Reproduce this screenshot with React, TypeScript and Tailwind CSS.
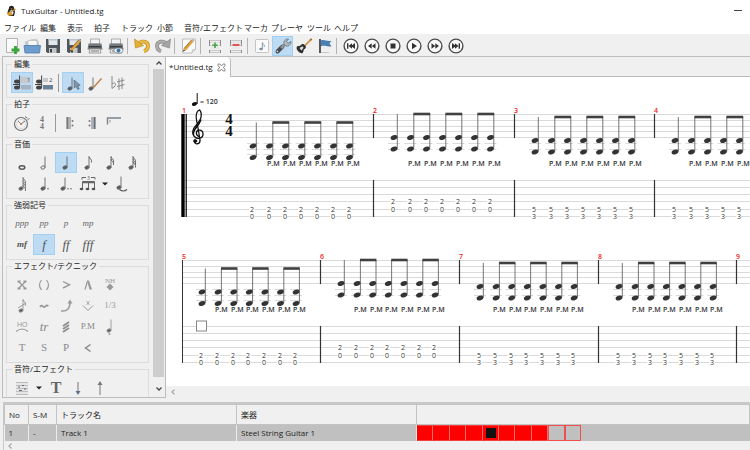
import type { ReactNode } from 'react';

/* ---------- shared bits ---------- */

function Icon({ children }: { children: ReactNode }) {
  return (
    <svg width="20" height="20" viewBox="0 0 20 20" fill="none" className="shrink-0">
      {children}
    </svg>
  );
}

type ButtonProps = { label: string; active?: boolean; children: ReactNode };

function ToolbarButton({ label, active, children }: ButtonProps) {
  return (
    <button
      type="button"
      aria-label={label}
      className={`flex h-5 w-[21px] items-center justify-center ${active ? 'bg-[#bddcf4] outline outline-1 -outline-offset-1 outline-[#a3cff0]' : ''}`}
    >
      {children}
    </button>
  );
}

function PaletteButton({ label, active, children }: ButtonProps) {
  return (
    <button
      type="button"
      aria-label={label}
      className={`flex h-[21px] w-[22px] items-center justify-center ${active ? 'bg-[#bddcf4] outline outline-1 -outline-offset-1 outline-[#a3cff0]' : ''}`}
    >
      {children}
    </button>
  );
}

function Separator() {
  return <div className="mr-[3px] ml-px h-4 w-px bg-[#b4b4b4]" />;
}

function Caret() {
  return (
    <button type="button" aria-label="選択" className="flex h-[21px] w-3 items-center justify-center">
      <svg width="6" height="4" viewBox="0 0 6 4"><path d="M0 .5h6L3 3.6z" fill="#222" /></svg>
    </button>
  );
}

function Chevron({ dir, color = '#444' }: { dir: 'up' | 'down' | 'left'; color?: string }) {
  const paths = { up: 'M1.5 5.5 4 3l2.5 2.5', down: 'M1.5 2.5 4 5l2.5-2.5', left: 'M5.5 1.5 3 4l2.5 2.5' };
  return (
    <svg width="8" height="8" viewBox="0 0 8 8" fill="none">
      <path d={paths[dir]} stroke={color} strokeWidth="1.3" />
    </svg>
  );
}

/* ---------- toolbar icons ---------- */

function Disk() {
  return (
    <>
      <path d="M3 3h14v14H4.500L3 15.500z" fill="#50565d" />
      <path d="M5.500 3h9v6h-9z" fill="#e4e7e9" />
      <path d="M5.500 3h9v1.500h-9z" fill="#b9c4cc" />
      <path d="M6 12h7.500v5H6z" fill="#c3c6c9" />
      <path d="M7 13h2v3.500H7z" fill="#444" />
    </>
  );
}

function Pencil() {
  return (
    <>
      <path d="M7 12.500 14.500 4l2 1.700-7.500 8.500-3 1.300z" fill="#e0a23c" />
      <path d="M7 12.500 14.500 4" stroke="#845b20" strokeWidth=".8" />
      <path d="m14.500 4 1.200-1.300 2 1.700-1.200 1.300z" fill="#b8b0a5" />
      <path d="m6 15.500.6-1.800 1.400 1.100z" fill="#222" />
    </>
  );
}

function Printer() {
  return (
    <>
      <path d="M5.500 3h9v5h-9z" fill="#f4f4f4" stroke="#999" strokeWidth=".8" />
      <path d="M3.500 7.500h13l1 6h-15z" fill="#777a7c" />
      <path d="M4 10h12v1.500H4z" fill="#393c3e" />
      <path d="M5 13h10l1 4H4z" fill="#eee" stroke="#8a8a8a" strokeWidth=".8" />
      <path d="M6 15h8" stroke="#666" strokeWidth=".9" />
    </>
  );
}

function Table({ mark }: { mark: 'plus' | 'minus' }) {
  return (
    <>
      <path d="M4 4.500h12M4 6.500h12M4 9.500h12M4 14.500h12M4 16.500h12" stroke="#c6c6c6" />
      <path d="M4.500 4v6M15.500 4v6M4.500 14v3M15.500 14v3" stroke="#8f8f8f" />
      <path d="M6 5h8v8H6z" fill="#e8e8e8" fillOpacity=".9" />
      {mark === 'plus' ? (
        <path d="M10 6.500v5.500M7.300 9.300h5.400" stroke="#4c9f4c" strokeWidth="1.600" />
      ) : (
        <path d="M6.500 9h7" stroke="#dc2f2f" strokeWidth="1.600" />
      )}
    </>
  );
}

function Transport({ children }: { children: ReactNode }) {
  return (
    <Icon>
      <circle cx="10" cy="10" r="6.900" fill="#fbfbfb" stroke="#4b4b4b" strokeWidth="1.400" />
      <g fill="#333">{children}</g>
    </Icon>
  );
}

function Toolbar() {
  return (
    <div className="flex h-[22px] items-center pt-px">
      <ToolbarButton label="新規">
        <Icon>
          <path d="M5.500 2.500h11v14h-11z" fill="#fafafa" stroke="#b3b3b3" />
          <path d="M14.500 10v8M10.500 14h8" stroke="#3aa53a" strokeWidth="2.800" />
        </Icon>
      </ToolbarButton>
      <ToolbarButton label="開く">
        <Icon>
          <path d="M3 5h5l1-2h6l2 3v6H3z" fill="#c9cdd0" />
          <path d="M6 4.500h9v6H6z" fill="#f7f7f7" stroke="#b8bcc0" strokeWidth=".7" />
          <path d="M2 9.500h16.500l-1 7.500H3z" fill="#6d9dcc" stroke="#4a7aab" strokeWidth=".8" />
        </Icon>
      </ToolbarButton>
      <ToolbarButton label="保存"><Icon><Disk /></Icon></ToolbarButton>
      <ToolbarButton label="名前を付けて保存"><Icon><Disk /><Pencil /></Icon></ToolbarButton>
      <ToolbarButton label="印刷"><Icon><Printer /></Icon></ToolbarButton>
      <ToolbarButton label="印刷プレビュー">
        <Icon>
          <Printer />
          <ellipse cx="12.500" cy="14.500" rx="4.500" ry="2.600" fill="#f5f8fa" stroke="#6c7d8a" strokeWidth=".8" />
          <circle cx="12.500" cy="14.500" r="2" fill="#3f78ad" />
        </Icon>
      </ToolbarButton>
      <Separator />
      <ToolbarButton label="元に戻す">
        <Icon>
          <path d="M5.500 8.500C9 4 16 4.800 16 10c0 3-2 4.600-4 5.200" stroke="#c08d1d" strokeWidth="3.800" />
          <path d="M5.500 8.500C9 4 16 4.800 16 10c0 3-2 4.600-4 5.200" stroke="#e9bd45" strokeWidth="2.400" />
          <path d="m2.500 3 1 9 8-2.500z" fill="#e2b033" stroke="#c08d1d" strokeWidth=".7" />
        </Icon>
      </ToolbarButton>
      <ToolbarButton label="やり直し">
        <Icon>
          <path d="M14.500 8.500C11 4 4 4.800 4 10c0 3 2 4.600 4 5.200" stroke="#8a8a8a" strokeWidth="3.800" />
          <path d="M14.500 8.500C11 4 4 4.800 4 10c0 3 2 4.600 4 5.200" stroke="#acacac" strokeWidth="2.400" />
          <path d="m17.500 3-1 9-8-2.500z" fill="#a5a5a5" stroke="#8a8a8a" strokeWidth=".7" />
        </Icon>
      </ToolbarButton>
      <Separator />
      <ToolbarButton label="曲情報">
        <Icon>
          <path d="M3.500 3h13v10.500l-3.500 3.500H3.500z" fill="#fafafa" stroke="#bdbdbd" />
          <path d="m13 17 .3-3.300 3.200-.2" fill="#ddd" stroke="#bdbdbd" strokeWidth=".7" />
          <g transform="translate(-2 0)"><Pencil /></g>
        </Icon>
      </ToolbarButton>
      <Separator />
      <ToolbarButton label="トラック追加"><Icon><Table mark="plus" /></Icon></ToolbarButton>
      <ToolbarButton label="トラック削除"><Icon><Table mark="minus" /></Icon></ToolbarButton>
      <Separator />
      <ToolbarButton label="鍵盤">
        <Icon>
          <rect x="3.500" y="3.500" width="13" height="13" rx="1" fill="#fafafa" stroke="#c4c4c4" />
          <ellipse cx="9" cy="13" rx="1.800" ry="1.300" fill="#7893ab" />
          <path d="M10.400 13V6.500c.4 1.800 2.600 2 1.800 4.500" stroke="#7893ab" strokeWidth=".9" />
        </Icon>
      </ToolbarButton>
      <ToolbarButton label="編集ツール" active>
        <Icon>
          <path d="m4.500 15.500 5-5" stroke="#444b52" strokeWidth="4" strokeLinecap="round" />
          <path d="m8 12 5.500-5" stroke="#8e969c" strokeWidth="2.800" />
          <path d="M11 8.500c-1-3 1.500-6 4.500-5.500l-2 2.500 1.500 1.800L18 5.500c.3 3-2.500 5.300-5.300 4.300z" fill="#b5babd" stroke="#666d73" strokeWidth=".8" />
          <circle cx="4.400" cy="15.300" r=".9" fill="#cfe0ec" />
        </Icon>
      </ToolbarButton>
      <ToolbarButton label="楽器">
        <Icon>
          <path d="m10 10.500 7-7" stroke="#d19a58" strokeWidth="1.800" />
          <path d="m15.700 3.300 1.600-1 1 1-1.400 1.700z" fill="#a8692b" />
          <path d="M3 10.500c1.500-1 2.300 0 3.300-1 1-1.300 2.200-2 3.500-1.300l1.900 2c.6 1.400-.2 2.300-1.500 3-1.300.9 0 2-1.600 3.800C6.500 18.500 1 13.500 3 10.500z" fill="#303030" />
          <path d="m5.500 12 2.800-1.700 1.300 1.400-2.200 2.800z" fill="#dedede" />
        </Icon>
      </ToolbarButton>
      <ToolbarButton label="マーカ">
        <Icon>
          <path d="M5 3v14" stroke="#333" strokeWidth="1.600" />
          <path d="M5.800 4.500c4-1.500 5 1.200 10.700.3l-2 2.700 2 2.700c-5 1-6.700-1.400-10.700.2z" fill="#4a7fb2" />
          <path d="M6 16.500h8" stroke="#c9c9c9" />
        </Icon>
      </ToolbarButton>
      <Separator />
      <ToolbarButton label="先頭へ"><Transport><path d="M6 7.300h1.400v5.400H6zM11 7.300v5.400L7.500 10zM14 7v6l-4-3z" /></Transport></ToolbarButton>
      <ToolbarButton label="前へ"><Transport><path d="M9.700 7.300v5.400L6 10zM13.500 7.300v5.400L9.800 10z" /></Transport></ToolbarButton>
      <ToolbarButton label="停止"><Transport><path d="M7.500 7.500h5v5h-5z" /></Transport></ToolbarButton>
      <ToolbarButton label="再生"><Transport><path d="M8 6.800v6.400l5-3.200z" /></Transport></ToolbarButton>
      <ToolbarButton label="次へ"><Transport><path d="M10.300 7.300v5.400L14 10zM6.500 7.300v5.400l3.700-2.700z" /></Transport></ToolbarButton>
      <ToolbarButton label="末尾へ"><Transport><path d="M12.600 7.300H14v5.400h-1.400zM9 7.300v5.400l3.500-2.700zM6 7v6l4-3z" /></Transport></ToolbarButton>
    </div>
  );
}

/* ---------- palette ---------- */

type NoteProps = { flags?: number; dots?: number; hollow?: boolean; color?: string };

function NoteGlyph({ flags = 0, dots = 0, hollow, color = '#666' }: NoteProps) {
  return (
    <>
      <ellipse
        cx="9"
        cy="14.500"
        rx="2.200"
        ry="1.500"
        transform="rotate(-20 9 14.500)"
        fill={hollow ? 'none' : '#525c68'}
        stroke={color}
        strokeWidth=".9"
      />
      <path d="M11 14.300V3.500" stroke={color} strokeWidth=".9" />
      {Array.from({ length: flags }, (_, i) => (
        <path key={i} d={`M11 ${3.5 + i * 2.5}c.3 2.500 3.500 2.500 2.400 6`} stroke={color} strokeWidth="1" />
      ))}
      {Array.from({ length: dots }, (_, i) => (
        <circle key={i} cx={14 + i * 3} cy="14.800" r=".8" fill={color} />
      ))}
    </>
  );
}

function ChordGlyph({ digit, light }: { digit: string; light?: boolean }) {
  return (
    <Icon>
      <path d={light ? 'M9 5h5v4H9z' : 'M9 4h9v6H9z'} fill="#c6c9cc" />
      <path d="M9 12h10v4.500H9z" fill={light ? '#6d8196' : '#a4b3c1'} />
      <ellipse cx="5" cy="8.500" rx="3" ry="2" fill="#444" />
      <ellipse cx="5" cy="14.500" rx="3" ry="2" fill="#444" />
      <path d="M7.600 14.500V2.500M1 11.500h7" stroke="#444" />
      <text x="15" y="9" fontSize="6" fill="#557" className="font-sans">{digit}</text>
    </Icon>
  );
}

function Group({ title, children }: { title: string; children: ReactNode }) {
  return (
    <fieldset className="min-w-0 border border-[#dcdcdc] px-1 pb-1">
      <legend className="ml-px px-0.5 text-[8px] leading-[12px] text-[#222]">{title}</legend>
      <div className="pt-0.5">{children}</div>
    </fieldset>
  );
}

function Row({ children }: { children: ReactNode }) {
  return <div className="flex h-[21px] items-center">{children}</div>;
}

function SerifGlyph({ text, className }: { text: string; className: string }) {
  return <span className={`font-['Liberation_Serif',serif] leading-none ${className}`}>{text}</span>;
}

const soft = ['ppp', 'pp', 'p', 'mp'];
const loud = ['mf', 'f', 'ff', 'fff'];

function Palette() {
  return (
    <aside className="flex w-[164px] shrink-0 border border-[#bcbcbc] pl-[3px]">
      <div className="min-w-0 flex-1 overflow-hidden pt-px pr-1">
        <Group title="編集">
          <Row>
            <PaletteButton label="声部1" active><ChordGlyph digit="1" /></PaletteButton>
            <PaletteButton label="声部2"><ChordGlyph digit="2" light /></PaletteButton>
            <div className="mx-[3px] h-[18px] w-px bg-[#999]" />
            <PaletteButton label="選択モード" active>
              <Icon>
                <g transform="translate(-2 1)"><NoteGlyph /></g>
                <path d="m11 7 .3 8 1.900-1.700 1.500 3.200 1.500-.8-1.500-3 2.500-.4z" fill="#8497aa" stroke="#556778" strokeWidth=".7" />
              </Icon>
            </PaletteButton>
            <PaletteButton label="編集モード">
              <Icon>
                <g transform="translate(-3 1)"><NoteGlyph /></g>
                <path d="m8 15 8.500-9.500" stroke="#bd8448" strokeWidth="1.500" />
              </Icon>
            </PaletteButton>
            <PaletteButton label="臨時記号">
              <Icon>
                <path d="M5 3v12.500c4-2 4.500-5.500 2-5.500q-1.200 0-2 1.200" stroke="#888" />
                <path d="M12 5.500V17M15 4.500V16M10 9l7.500-2M10 13.500l7.500-2" stroke="#888" />
              </Icon>
            </PaletteButton>
          </Row>
        </Group>

        <Group title="拍子">
          <Row>
            <PaletteButton label="テンポ">
              <Icon>
                <circle cx="9" cy="11" r="6.500" fill="#f3f3f3" stroke="#777" strokeWidth="1.200" />
                <circle cx="9" cy="11" r="4.500" stroke="#aaa" strokeDasharray="1 1.500" strokeWidth=".8" />
                <path d="M9 11 6 8M9 11l4-3M13 3.500l2.500 1.800M15.500 7l2-1.500" stroke="#777" />
                <circle cx="9" cy="11" r="1" fill="#b87a35" />
              </Icon>
            </PaletteButton>
            <PaletteButton label="拍子記号">
              <span className="mr-1 flex flex-col font-['Liberation_Serif',serif] text-[8px] leading-[7px] font-bold text-[#777]">
                <span>4</span>
                <span>4</span>
              </span>
            </PaletteButton>
            <div className="mr-[3px] h-[18px] w-px bg-[#999]" />
            <PaletteButton label="反復開始">
              <Icon>
                <path d="M7.500 4v12" stroke="#777" strokeWidth="2.200" />
                <path d="M10 4v12" stroke="#777" />
                <circle cx="12.500" cy="8" r="1" fill="#777" /><circle cx="12.500" cy="12.500" r="1" fill="#777" />
              </Icon>
            </PaletteButton>
            <PaletteButton label="反復終了">
              <Icon>
                <path d="M12.500 4v12" stroke="#69727c" strokeWidth="2.200" />
                <path d="M10 4v12" stroke="#777" />
                <circle cx="7.500" cy="8" r="1" fill="#777" /><circle cx="7.500" cy="12.500" r="1" fill="#777" />
              </Icon>
            </PaletteButton>
            <PaletteButton label="反復括弧">
              <Icon>
                <path d="M3.500 11.500V5H17" stroke="#7a828b" strokeWidth="1.400" />
                <path d="M6 9.500V7" stroke="#999" />
              </Icon>
            </PaletteButton>
          </Row>
        </Group>

        <Group title="音価">
          <Row>
            <PaletteButton label="全音符">
              <Icon><ellipse cx="10" cy="14.500" rx="2.800" ry="1.700" fill="#f0f0f0" stroke="#555" strokeWidth="1.500" /></Icon>
            </PaletteButton>
            <PaletteButton label="2分音符"><Icon><NoteGlyph hollow /></Icon></PaletteButton>
            <PaletteButton label="4分音符" active><Icon><NoteGlyph /></Icon></PaletteButton>
            <PaletteButton label="8分音符"><Icon><NoteGlyph flags={1} /></Icon></PaletteButton>
            <PaletteButton label="16分音符"><Icon><NoteGlyph flags={2} /></Icon></PaletteButton>
            <PaletteButton label="32分音符"><Icon><NoteGlyph flags={3} /></Icon></PaletteButton>
          </Row>
          <Row>
            <PaletteButton label="64分音符"><Icon><NoteGlyph flags={4} color="#777" /></Icon></PaletteButton>
            <PaletteButton label="付点"><Icon><NoteGlyph dots={1} /></Icon></PaletteButton>
            <PaletteButton label="複付点"><Icon><g transform="translate(-2)"><NoteGlyph dots={2} /></g></Icon></PaletteButton>
            <PaletteButton label="連符">
              <Icon>
                <path d="M4.500 15V7.500h12V15M10.500 15V7.500M4 5.500V3.500h4M17 5.500V3.500h-4" stroke="#666" />
                <path d="M4.500 8.500h12" stroke="#666" strokeWidth="1.500" />
                <ellipse cx="3.500" cy="15" rx="1.900" ry="1.300" fill="#555" />
                <ellipse cx="9.500" cy="15" rx="1.900" ry="1.300" fill="#555" />
                <ellipse cx="15.500" cy="15" rx="1.900" ry="1.300" fill="#555" />
                <text x="9" y="6" fontSize="5" fill="#555">3</text>
              </Icon>
            </PaletteButton>
            <Caret />
            <PaletteButton label="タイ">
              <Icon>
                <g transform="translate(-2 -1)"><NoteGlyph /></g>
                <path d="M7.500 15.500q4 3 7.500 0" stroke="#555" strokeWidth="1.200" />
              </Icon>
            </PaletteButton>
          </Row>
        </Group>

        <Group title="強弱記号">
          <Row>
            {soft.map((d) => (
              <PaletteButton key={d} label={d}>
                <SerifGlyph text={d} className="text-[9px] italic text-[#666]" />
              </PaletteButton>
            ))}
          </Row>
          <Row>
            {loud.map((d) => (
              <PaletteButton key={d} label={d} active={d === 'f'}>
                <SerifGlyph
                  text={d}
                  className={`italic text-[#555] ${d === 'mf' ? 'text-[9px] font-bold' : 'text-[13px]'}`}
                />
              </PaletteButton>
            ))}
          </Row>
        </Group>

        <Group title="エフェクト/テクニック">
          <Row>
            <PaletteButton label="デッドノート">
              <Icon>
                <path d="m7 7 6 6M13 7l-6 6" stroke="#999" strokeWidth="1.300" />
                <path d="M5.500 5.500h3v2h-3zM11.500 5.500h3v2h-3zM5.500 12.500h3v2h-3zM11.500 12.500h3v2h-3z" fill="#999" />
              </Icon>
            </PaletteButton>
            <PaletteButton label="ゴーストノート">
              <Icon><path d="M7.500 5q-4 5 0 10M12.500 5q4 5 0 10" stroke="#999" strokeWidth="1.200" /></Icon>
            </PaletteButton>
            <PaletteButton label="アクセント">
              <Icon><path d="m7 6.500 6.500 3.300L7 13" stroke="#999" strokeWidth="1.400" /></Icon>
            </PaletteButton>
            <PaletteButton label="ヘビーアクセント">
              <Icon><path d="m9.500 6-2.500 8.500" stroke="#999" strokeWidth="1.200" /><path d="m9 5.500 2.500 9H14l-3-9z" fill="#999" /></Icon>
            </PaletteButton>
            <PaletteButton label="ハーモニクス">
              <Icon>
                <text x="5" y="8" fontSize="7" fill="#999" fontFamily="Liberation Serif, serif">NH</text>
                <path d="m10 8.500 3.500 3.500-3.500 3.500L6.500 12z" fill="#999" />
              </Icon>
            </PaletteButton>
          </Row>
          <Row>
            <PaletteButton label="装飾音">
              <Icon><NoteGlyph flags={1} color="#999" /><path d="m6 12 8-5" stroke="#999" /></Icon>
            </PaletteButton>
            <PaletteButton label="ビブラート">
              <Icon><path d="M6 11q1.500-2.500 2.800-.7t2.700 0 2.800 0" stroke="#999" strokeWidth="1.700" /></Icon>
            </PaletteButton>
            <PaletteButton label="ベンド">
              <Icon><path d="M5 15c6 .5 9-2 9-9.500" stroke="#999" strokeWidth="1.600" /><path d="m11.500 7.500 2.500-4 2.500 4z" fill="#999" /></Icon>
            </PaletteButton>
            <PaletteButton label="トレモロバー">
              <Icon><path d="m5 9.500 5 5 5-5" stroke="#999" /><path d="m8.500 5 3 4M11.500 5l-3 4" stroke="#999" strokeWidth=".8" /></Icon>
            </PaletteButton>
            <PaletteButton label="スライド">
              <SerifGlyph text="1/3" className="text-[9px] text-[#999]" />
            </PaletteButton>
          </Row>
          <Row>
            <PaletteButton label="ハンマリング">
              <Icon>
                <text x="5" y="10" fontSize="7" fill="#999" fontFamily="Liberation Sans, sans-serif">HO</text>
                <path d="M4 14.500q6-5 12 0" stroke="#999" strokeWidth="1.100" />
              </Icon>
            </PaletteButton>
            <PaletteButton label="トリル">
              <SerifGlyph text="tr" className="text-[13px] italic text-[#888]" />
            </PaletteButton>
            <PaletteButton label="トレモロピッキング">
              <Icon><path d="m7 9 6-4M7 12l6-4M7 15l6-4" stroke="#909090" strokeWidth="1.900" /></Icon>
            </PaletteButton>
            <PaletteButton label="パームミュート">
              <SerifGlyph text="P.M" className="text-[9px] text-[#888]" />
            </PaletteButton>
            <PaletteButton label="スタッカート">
              <Icon><g transform="translate(0 -1)"><NoteGlyph color="#999" /></g><circle cx="9.500" cy="17" r=".9" fill="#999" /></Icon>
            </PaletteButton>
          </Row>
          <Row>
            {['T', 'S', 'P'].map((t) => (
              <PaletteButton key={t} label={t}>
                <SerifGlyph text={t} className="text-[11px] text-[#8a8a8a]" />
              </PaletteButton>
            ))}
            <PaletteButton label="フェードイン">
              <Icon><path d="M12.500 6.500 7.500 10l5 3.500" stroke="#888" strokeWidth="1.500" /></Icon>
            </PaletteButton>
          </Row>
        </Group>

        <Group title="音符/エフェクト">
          <Row>
            <PaletteButton label="コード">
              <Icon>
                <path d="M4 4h12v13H4z" fill="#e6e6e6" />
                <path d="M4 4.500h12M4 7.500h12M4 10.500h12M4 13.500h12M4 16.500h12" stroke="#bbb" />
                <path d="M6 9h2M10 7.500h2M7 12.500h3M12 11h2" stroke="#667" strokeWidth="1.200" />
              </Icon>
            </PaletteButton>
            <Caret />
            <PaletteButton label="テキスト">
              <SerifGlyph text="T" className="text-[16px] font-bold text-[#666]" />
            </PaletteButton>
            <PaletteButton label="下ストローク">
              <Icon><path d="M10 4v11" stroke="#777" /><path d="m7.500 13 2.500 4 2.500-4z" fill="#617287" /></Icon>
            </PaletteButton>
            <PaletteButton label="上ストローク">
              <Icon><path d="M10 5v12" stroke="#777" /><path d="m7.500 7 2.500-4 2.500 4z" fill="#777" /></Icon>
            </PaletteButton>
          </Row>
        </Group>
      </div>
      <div className="flex w-3 shrink-0 flex-col bg-[#f0f0f0] pr-px">
        <button type="button" aria-label="上へ" className="flex h-3 items-center justify-center"><Chevron dir="up" /></button>
        <div className="flex-1 bg-[#cdcdcd]" />
        <button type="button" aria-label="下へ" className="flex h-5 items-center justify-center pt-1"><Chevron dir="down" /></button>
      </div>
    </aside>
  );
}

/* ---------- score ---------- */

type Measure = {
  number: number;
  bar: number; // x of the left bar line
  first: number; // x of the first chord
  rise: number; // beam position below the top staff line
  line: number; // tab line of the upper fret
  frets: [string, string];
};

const systems: { y: number; step: number; measures: Measure[] }[] = [
  {
    y: 37,
    step: 16,
    measures: [
      { number: 1, bar: 16, first: 87, rise: 8.5, line: 4, frets: ['2', '0'] },
      { number: 2, bar: 207, first: 228, rise: 0, line: 3, frets: ['2', '0'] },
      { number: 3, bar: 348, first: 369, rise: 3, line: 4, frets: ['5', '3'] },
      { number: 4, bar: 488, first: 509, rise: 3, line: 4, frets: ['5', '3'] },
    ],
  },
  {
    y: 183,
    step: 15.6,
    measures: [
      { number: 5, bar: 16, first: 36, rise: 8.5, line: 4, frets: ['2', '0'] },
      { number: 6, bar: 154, first: 175, rise: 0, line: 3, frets: ['2', '0'] },
      { number: 7, bar: 293, first: 314, rise: 3, line: 4, frets: ['5', '3'] },
      { number: 8, bar: 432, first: 453, rise: 3, line: 4, frets: ['5', '3'] },
      { number: 9, bar: 570, first: 591, rise: 3, line: 4, frets: ['5', '3'] },
    ],
  },
];

const staffLines = [0, 6, 12, 17, 23];
const tabLines = [66, 73, 80, 87, 95, 102];

function MeasureView({ m, step }: { m: Measure; step: number }) {
  const xs = Array.from({ length: 7 }, (_, i) => m.first + (i ? 0.5 : 0) + i * step);
  const ledgers = m.rise > 5 ? [29, 35, 40] : [29, 35];

  return (
    <g>
      <text x={m.bar} y={-1} fontSize="7" fontWeight="600" fill="#f02020">{m.number}</text>
      {m.number !== 1 && m.number !== 5 && (
        <path d={`M${m.bar + 0.5} 0v24M${m.bar + 0.5} 66v37`} stroke="#333" strokeWidth="1.200" />
      )}
      {xs.map((x, i) => (
        <g key={i}>
          {ledgers.map((y) => (
            <path key={y} d={`M${x - 6} ${y + 0.5}h12`} stroke="#dadada" />
          ))}
          <path d={`M${x + 3.3} ${m.rise}V${m.rise + 34.5}`} stroke="#666" strokeWidth=".9" />
          {[23.5, 35].map((dy) => (
            <ellipse
              key={dy}
              cx={x}
              cy={m.rise + dy}
              rx="3.500"
              ry="2.300"
              transform={`rotate(-20 ${x} ${m.rise + dy})`}
              fill="#333"
            />
          ))}
          {i > 0 && (
            <text x={Math.round(x - 3)} y={52} fontSize="7" fill="#333" fontWeight="600">P.M</text>
          )}
          {m.frets.map((fret, k) => (
            <g key={k}>
              <rect x={x - 3.5} y={tabLines[m.line + k] - 2} width="5" height="5" fill="#fff" />
              <text x={Math.round(x - 1)} y={tabLines[m.line + k] + 3} fontSize="7" fill="#333" textAnchor="middle">
                {fret}
              </text>
            </g>
          ))}
        </g>
      ))}
      {[1, 3, 5].map((i) => (
        <path key={i} d={`M${xs[i] + 2.9} ${m.rise}H${xs[i + 1] + 3.7}`} stroke="#404040" strokeWidth="2.600" />
      ))}
    </g>
  );
}

function Score() {
  return (
    <svg className="h-full w-full font-['Open_Sans','Noto_Sans',sans-serif]" fill="none">
      {systems.map((s) => (
        <g key={s.y} transform={`translate(0 ${s.y})`}>
          {[...staffLines, ...tabLines].map((y) => (
            <line key={y} x1="16" x2="100%" y1={y + 0.5} y2={y + 0.5} stroke="#dadada" />
          ))}
          {s.measures.map((m) => (
            <MeasureView key={m.number} m={m} step={s.step} />
          ))}
        </g>
      ))}

      {/* opening bar, clef, time signature and tempo */}
      <path d="M15.300 37h3.400v103h-3.400zM19.600 37h1.200v103h-1.200z" fill="#000" />
      <g stroke="#111" strokeLinecap="round">
        <path d="M33 59.500C29.500 58.500 29.500 53.500 33 53.200 38 53 38.500 60 33.500 61.300 28 62 25.500 56.500 27.500 52 29.500 48 34.800 44.500 35.200 39 35.400 35.500 34.300 33 33.200 33 30.500 34.500 29.800 39 30.500 43L34 62.500C34.500 67.500 30 67.800 28.500 65.500" strokeWidth="1.300" />
        <path d="M27.400 57c-.4-5 5-7 7.300-14" strokeWidth="1.700" />
        <circle cx="29.200" cy="64" r="1.500" fill="#111" />
      </g>
      <g fill="#111" fontSize="15" fontWeight="700" textAnchor="middle" fontFamily="Liberation Serif, serif">
        <text x="63" y="47">4</text>
        <text x="63" y="59">4</text>
      </g>
      <ellipse cx="28.500" cy="27" rx="2.700" ry="1.800" transform="rotate(-20 28.500 27)" fill="#111" />
      <path d="M31.200 27V16" stroke="#111" />
      <text x="34" y="27" fontSize="7" fontWeight="600" fill="#333">= 120</text>

      <path d="M16.500 183v103" stroke="#333" />
      {/* caret on the first string */}
      <rect x="30.500" y="244" width="10" height="10" fill="#fff" stroke="#888" />
    </svg>
  );
}

/* ---------- track table ---------- */

const filled = [true, true, true, true, true, true, true, true, false, false];
const headCell = 'h-5 border border-[#c3c3c3] bg-[#f0f0f0] px-1 text-left font-normal';

function Tracks() {
  return (
    <section className="mt-1 ml-[3px] border-t-2 border-l border-[#c8c8c8]">
      <table className="w-full table-fixed border-collapse text-[8px] text-[#222]">
        <colgroup>
          <col className="w-6" />
          <col className="w-7" />
          <col className="w-45" />
          <col className="w-45" />
          <col />
        </colgroup>
        <thead>
          <tr>
            <th className={headCell}>No</th>
            <th className={headCell}>S-M</th>
            <th className={headCell}>トラック名</th>
            <th className={headCell}>楽器</th>
            <th className={headCell} aria-label="小節" />
          </tr>
        </thead>
        <tbody>
          <tr className="h-4 bg-[#c0c0c0]">
            <td className="border-r border-[#ececec] px-1">1</td>
            <td className="border-r border-[#ececec] px-1">-</td>
            <td className="border-r border-[#ececec] px-1">Track 1</td>
            <td className="border-r border-[#ececec] px-1">Steel String Guitar 1</td>
            <td className="p-0">
              <div className="grid h-4 w-41 grid-cols-10">
                {filled.map((on, i) => (
                  <div
                    key={i}
                    className={`flex items-center justify-center border ${on ? 'border-y-[#f04040] border-r-[#f07070] border-l-[#ff0000] bg-[#ff0000]' : 'border-[#ee4f4f]'}`}
                  >
                    {i === 4 && <span className="size-2.5 bg-[#111]" />}
                  </div>
                ))}
              </div>
            </td>
          </tr>
        </tbody>
      </table>
      <div className="flex h-[9px] items-center pl-0.5"><Chevron dir="left" color="#aaa" /></div>
    </section>
  );
}

/* ---------- window ---------- */

const menus = [
  { name: 'ファイル', width: 'w-9' },
  { name: '編集', width: 'w-[27px]' },
  { name: '表示', width: 'w-[27px]' },
  { name: '拍子', width: 'w-[27px]' },
  { name: 'トラック', width: 'w-9' },
  { name: '小節', width: 'w-[27px]' },
  { name: '音符/エフェクト', width: 'w-15' },
  { name: 'マーカ', width: 'w-[27px]' },
  { name: 'プレーヤ', width: 'w-9' },
  { name: 'ツール', width: 'w-[27px]' },
  { name: 'ヘルプ', width: 'w-[27px]' },
];

export default function App() {
  return (
    <div className="flex h-screen flex-col overflow-hidden bg-[#f0f0f0] font-['Open_Sans','Noto_Sans_CJK_JP',sans-serif] text-[#222]">
      <header className="bg-white">
        <div className="flex h-[21px] items-center justify-between pr-2 pl-1.5">
          <div className="flex items-center gap-1">
            <svg width="11" height="12" viewBox="0 0 11 12">
              <path d="M3 3c0-3 5-3 5 0l1 4-1 4H3L1.500 7z" fill="#222" />
              <ellipse cx="5.500" cy="7.500" rx="2" ry="2.500" fill="#eee" />
              <path d="m4.500 3.500 1 1.200 1.200-1.200z" fill="#e4a520" />
              <path d="m1 9 8.500-5" stroke="#c58a2a" strokeWidth="1.300" />
              <ellipse cx="4" cy="9" rx="2.500" ry="1.800" fill="#d89b2f" />
            </svg>
            <h1 className="text-[8px] leading-3">TuxGuitar - Untitled.tg</h1>
          </div>
          <button type="button" aria-label="最小化" className="flex h-4 w-2 items-center">
            <span className="h-px w-full bg-[#444]" />
          </button>
        </div>
        <nav className="flex h-[13px] items-center pl-1 text-[8px] leading-3 whitespace-nowrap">
          {menus.map((m) => (
            <button key={m.name} type="button" className={`text-left ${m.width}`}>{m.name}</button>
          ))}
        </nav>
      </header>

      <Toolbar />

      <main className="flex min-h-0 flex-1 pl-0.5">
        <Palette />
        <section className="flex min-w-0 flex-1 flex-col">
          <div className="flex h-[21px] shrink-0 border-t border-[#bcbcbc]">
            <div className="flex items-center gap-1 rounded-tr border-r border-[#bcbcbc] bg-white pr-1 pl-[3px]">
              <span className="text-[8px]">*Untitled.tg</span>
              <button type="button" aria-label="閉じる">
                <svg width="9" height="9" viewBox="0 0 9 9" fill="none">
                  <path d="M1 1h2l1.500 2L6 1h2v2L6 4.500 8 6v2H6L4.500 6 3 8H1V6l2-1.500L1 3z" stroke="#777" strokeWidth=".8" />
                </svg>
              </button>
            </div>
            <div className="flex-1 border-b border-[#bcbcbc]" />
          </div>
          <div className="min-h-0 flex-1 bg-white"><Score /></div>
          <div className="flex h-3 shrink-0 items-center bg-[#f0f0f0] pl-[3px]"><Chevron dir="left" color="#aaa" /></div>
        </section>
      </main>

      <Tracks />
    </div>
  );
}
